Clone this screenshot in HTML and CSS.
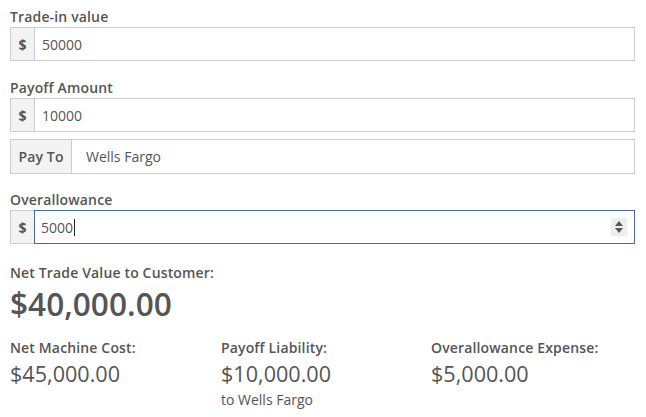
FILE: index.html
```html
<!DOCTYPE html>
<html lang="en">
<head>
    <meta charset="UTF-8">
    <title>Trade-in</title>
    <link rel="stylesheet" href="styles.css">
</head>
<body>
<div class="wrap">
    <div class="group g1">
        <label class="lbl">Trade-in value</label>
        <div class="input-group">
            <span class="addon">$</span>
            <input class="field num" type="text" value="50000">
        </div>
    </div>

    <div class="group g2">
        <label class="lbl">Payoff Amount</label>
        <div class="input-group">
            <span class="addon">$</span>
            <input class="field num" type="text" value="10000">
        </div>
        <div class="input-group payto">
            <span class="addon addon-text">Pay To</span>
            <input class="field txt" type="text" value="Wells Fargo">
        </div>
    </div>

    <div class="group g3">
        <label class="lbl">Overallowance</label>
        <div class="input-group">
            <span class="addon">$</span>
            <div class="field num focus">5000<span class="caret"></span>
                <span class="spin"><i class="up"></i><i class="down"></i></span>
            </div>
        </div>
    </div>

    <div class="result">
        <div class="lbl">Net Trade Value to Customer:</div>
        <div class="big">$40,000.00</div>
    </div>

    <div class="cols">
        <div class="col">
            <div class="lbl">Net Machine Cost:</div>
            <div class="val">$45,000.00</div>
        </div>
        <div class="col">
            <div class="lbl">Payoff Liability:</div>
            <div class="val">$10,000.00</div>
            <div class="note">to Wells Fargo</div>
        </div>
        <div class="col">
            <div class="lbl">Overallowance Expense:</div>
            <div class="val">$5,000.00</div>
        </div>
    </div>
</div>
</body>
</html>
```

FILE: styles.css
```css
*{
    margin: 0;padding: 0;
    box-sizing: border-box;
}
body{
    font-family: "Open Sans", "Liberation Sans", sans-serif;
    font-size: 14px;
    color: #555;
    background: #fff;
}
.wrap{
    width: 625px;
    margin-left: 10px;
    padding-top: 7px;
}
.lbl{
    display: block;
    font-weight: 600;
    line-height: 20px;
    letter-spacing: 0.15px;
    color: #555;
}
.g1{margin-bottom: 17px}
.g2{margin-bottom: 16px}
.g3{margin-bottom: 19px}

.input-group{
    display: flex;
    height: 34px;
}
.payto{margin-top: 7px;height: 35px}
.addon{
    width: 24px;
    flex: none;
    display: flex;
    align-items: center;
    justify-content: center;
    background: #f3f3f3;
    border: 1px solid #ccc;
    border-right: 0;
    font-weight: 700;
    color: #555;
}
.addon-text{
    width: 61px;
    font-weight: 600;
    letter-spacing: 0.15px;
}
.field{
    flex: 1;
    min-width: 0;
    border: 1px solid #ccc;
    font-family: inherit;
    font-size: 14px;
    color: #555;
    outline: none;
    background: #fff;
}
.num{padding-left: 7px}
.txt{padding-left: 14px}
.focus{
    position: relative;
    display: flex;
    align-items: center;
    border-color: #4a6c94;
    padding-left: 6px;
}
.caret{
    display: inline-block;
    width: 1px;
    height: 17px;
    background: #222;
    margin-left: 1px;
}
.spin{
    position: absolute;
    right: 7px;
    top: 7px;
    width: 16px;
    height: 18px;
    background: #eee;
}
.spin i{
    position: absolute;
    left: 4px;
    width: 0;height: 0;
    border-left: 4px solid transparent;
    border-right: 4px solid transparent;
}
.spin .up{top: 3px;border-bottom: 5px solid #555}
.spin .down{bottom: 3px;border-top: 5px solid #555}

.big{
    margin-top: 1px;
    font-size: 31.6px;
    font-weight: 600;
    line-height: 40px;
    color: #555;
}
.cols{
    display: grid;
    grid-template-columns: 211px 210px 1fr;
    margin-top: 14px;
}
.val{
    margin-top: 2px;
    font-size: 21.6px;
    line-height: 28px;
}
.note{
    margin-top: 2px;
    line-height: 20px;
}
```
